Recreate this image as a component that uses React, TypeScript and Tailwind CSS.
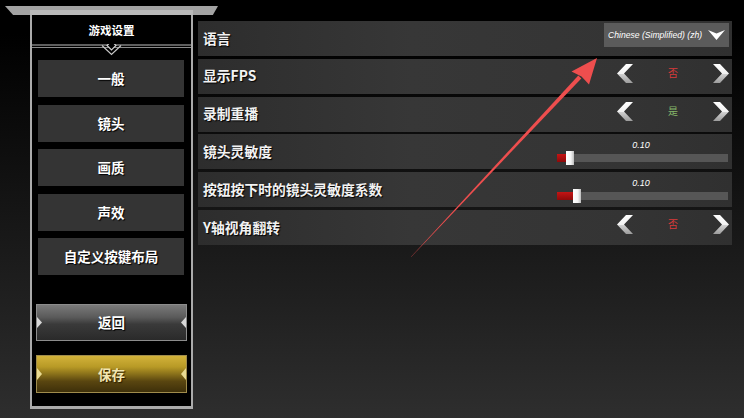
import React from "react";

const CJK = "font-['Noto_Sans_CJK_SC','Noto_Sans',sans-serif]";

function Chevron({ dir, id }: { dir: "l" | "r"; id: string }) {
  const pts =
    dir === "l"
      ? "16,0 9,0 0,9.5 9,19 16,19 7,9.5"
      : "0,0 7,0 16,9.5 7,19 0,19 9,9.5";
  return (
    <svg width="16" height="19" viewBox="0 0 16 19">
      <defs>
        <linearGradient id={id} x1="0" y1="0" x2="0" y2="1">
          <stop offset="0" stopColor="#ffffff" />
          <stop offset="0.5" stopColor="#f2f2f2" />
          <stop offset="0.55" stopColor="#cfcfcf" />
          <stop offset="1" stopColor="#9c9c9c" />
        </linearGradient>
      </defs>
      <polygon points={pts} fill={`url(#${id})`} />
    </svg>
  );
}

function Row({ label, children }: { label: string; children?: React.ReactNode }) {
  return (
    <div className="h-[35px] flex items-center justify-between pl-[5px] bg-[linear-gradient(90deg,#2d2d2d,#373737_40%,#343434_80%,#303030)]">
      <span className={`${CJK} text-[13.8px] font-bold text-[#f2f2f2] leading-none [text-shadow:1px_1px_1px_#000]`}>
        {label}
      </span>
      {children}
    </div>
  );
}

function Toggle({ value, yes, id }: { value: string; yes?: boolean; id: string }) {
  return (
    <div className="flex items-center justify-between w-[112px] mr-[3px] mb-[6px]">
      <Chevron dir="l" id={`${id}l`} />
      <span className={`${CJK} text-[10px] leading-none ${yes ? "text-[#86b86a]" : "text-[#d83a3a]"}`}>
        {value}
      </span>
      <Chevron dir="r" id={`${id}r`} />
    </div>
  );
}

function Slider({ fill }: { fill: string }) {
  return (
    <div className="self-start mt-[6px] mr-[4px] w-[171px] flex flex-col">
      <div className="h-[10px] leading-[10px] text-center text-[9px] italic text-white font-['Liberation_Sans',sans-serif] pr-[3px]">
        0.10
      </div>
      <div className="mt-[1px] h-[14px] flex items-center">
        <div className={`${fill} h-[8px] bg-[linear-gradient(180deg,#c41414,#8e0a0a)]`} />
        <div className="w-[8px] h-[14px] bg-[linear-gradient(90deg,#ffffff,#f4f4f4_60%,#bdbdbd)]" />
        <div className="flex-1 h-[8px] bg-[#565656]" />
      </div>
    </div>
  );
}

function MenuBtn({ label }: { label: string }) {
  return (
    <div
      className={`h-[37px] w-[146px] ml-[6px] bg-[#343434] flex items-center justify-center ${CJK} text-[13.5px] font-bold text-white [text-shadow:1px_1px_1px_#000]`}
    >
      {label}
    </div>
  );
}

export default function App() {
  return (
    <div className="w-[744px] h-[418px] overflow-hidden relative bg-[linear-gradient(180deg,#000_0%,#000_8%,#1a1a1a_60%,#2e2e2e_100%)]">
      <div className="pt-[6px]">
        {/* header tab */}
        <div className="ml-[5px] w-[213px] h-[9px] bg-[#a3a3a3] [clip-path:polygon(0_0,100%_0,97.6%_100%,3.8%_100%)] flex flex-col">
          <div className="ml-[25px] mt-[4px] w-[163px] h-[5px] bg-[#b9b9b9]" />
        </div>

        <div className="flex">
          {/* left panel */}
          <div className="ml-[30px] w-[163px] h-[394px] border-x-2 border-b-[3px] border-[#ababab] bg-black flex flex-col">
            <div
              className={`h-[26px] mt-[3px] flex items-center justify-center ${CJK} text-[11.5px] font-bold text-white [text-shadow:1px_1px_1px_#000]`}
            >
              游戏设置
            </div>
            <svg width="159" height="12" viewBox="0 0 159 12" className="block">
              <line x1="0" y1="1" x2="159" y2="1" stroke="#bdbdbd" strokeWidth="1" />
              <line x1="0" y1="3.5" x2="159" y2="3.5" stroke="#8a8a8a" strokeWidth="1" />
              <polyline points="70,1.5 79.5,10.5 89,1.5" fill="none" stroke="#c8c8c8" strokeWidth="1.2" />
              <polygon points="79.5,-3 84,1.5 79.5,6 75,1.5" fill="#000" stroke="#d0d0d0" strokeWidth="1.2" />
            </svg>
            <div className="mt-[4px] flex flex-col gap-[7.5px]">
              <MenuBtn label="一般" />
              <MenuBtn label="镜头" />
              <MenuBtn label="画质" />
              <MenuBtn label="声效" />
              <MenuBtn label="自定义按键布局" />
            </div>

            {/* back */}
            <div className="mt-[29px] ml-[4px] w-[151px] h-[37px] border border-[#8c8c8c] bg-[linear-gradient(180deg,#7a7a7a_0%,#5a5a5a_35%,#3a3a3a_55%,#2a2a2a_100%)] flex items-center justify-between">
              <div className="w-[5px] h-[11px] bg-[#d8d8d8] [clip-path:polygon(0_0,100%_50%,0_100%)]" />
              <span className={`${CJK} text-[13.5px] font-bold text-white [text-shadow:1px_1px_1px_#000]`}>返回</span>
              <div className="w-[5px] h-[11px] bg-[#d8d8d8] [clip-path:polygon(100%_0,0_50%,100%_100%)]" />
            </div>

            {/* save */}
            <div className="mt-[14px] ml-[4px] w-[151px] h-[38px] border border-[#a08c4c] bg-[linear-gradient(180deg,#d2b23a_0%,#b89a26_30%,#8a711a_50%,#5a4610_70%,#3e300a_100%)] flex items-center justify-between">
              <div className="w-[5px] h-[12px] bg-[#eadb92] [clip-path:polygon(0_0,100%_50%,0_100%)]" />
              <span className={`${CJK} text-[13.5px] font-bold text-[#f3e6b0] [text-shadow:1px_1px_1px_#2a1c00]`}>保存</span>
              <div className="w-[5px] h-[12px] bg-[#eadb92] [clip-path:polygon(100%_0,0_50%,100%_100%)]" />
            </div>
          </div>

          {/* right settings */}
          <div className="ml-[5px] pt-[6px] w-[534px] flex flex-col gap-[2.8px]">
            <Row label="语言">
              <div className="self-start mt-[2px] mr-[3px] w-[125px] h-[24px] bg-[#5b5b5b] flex items-center justify-between pl-[4px] pr-[4px]">
                <span className="text-[8.6px] italic text-white font-['Liberation_Sans',sans-serif] leading-none">
                  Chinese (Simplified) (zh)
                </span>
                <svg width="17" height="10" viewBox="0 0 17 10">
                  <polygon points="0,0 8.5,3.5 17,0 8.5,10" fill="#ffffff" />
                </svg>
              </div>
            </Row>
            <Row label="显示FPS">
              <Toggle value="否" id="t1" />
            </Row>
            <Row label="录制重播">
              <Toggle value="是" yes id="t2" />
            </Row>
            <Row label="镜头灵敏度">
              <Slider fill="w-[9px]" />
            </Row>
            <Row label="按钮按下时的镜头灵敏度系数">
              <Slider fill="w-[16px]" />
            </Row>
            <Row label="Y轴视角翻转">
              <Toggle value="否" id="t3" />
            </Row>
          </div>
        </div>
      </div>

      {/* annotation arrow */}
      <svg className="absolute inset-0 pointer-events-none" width="744" height="418" viewBox="0 0 744 418">
        <polygon points="410.6,257.3 411.4,256.7 581.3,78.4 578.3,75.6" fill="#ee4e4e" />
        <polygon points="597,58 571.5,71.5 581.5,76.5 589,84.5" fill="#ee4e4e" />
      </svg>
    </div>
  );
}
